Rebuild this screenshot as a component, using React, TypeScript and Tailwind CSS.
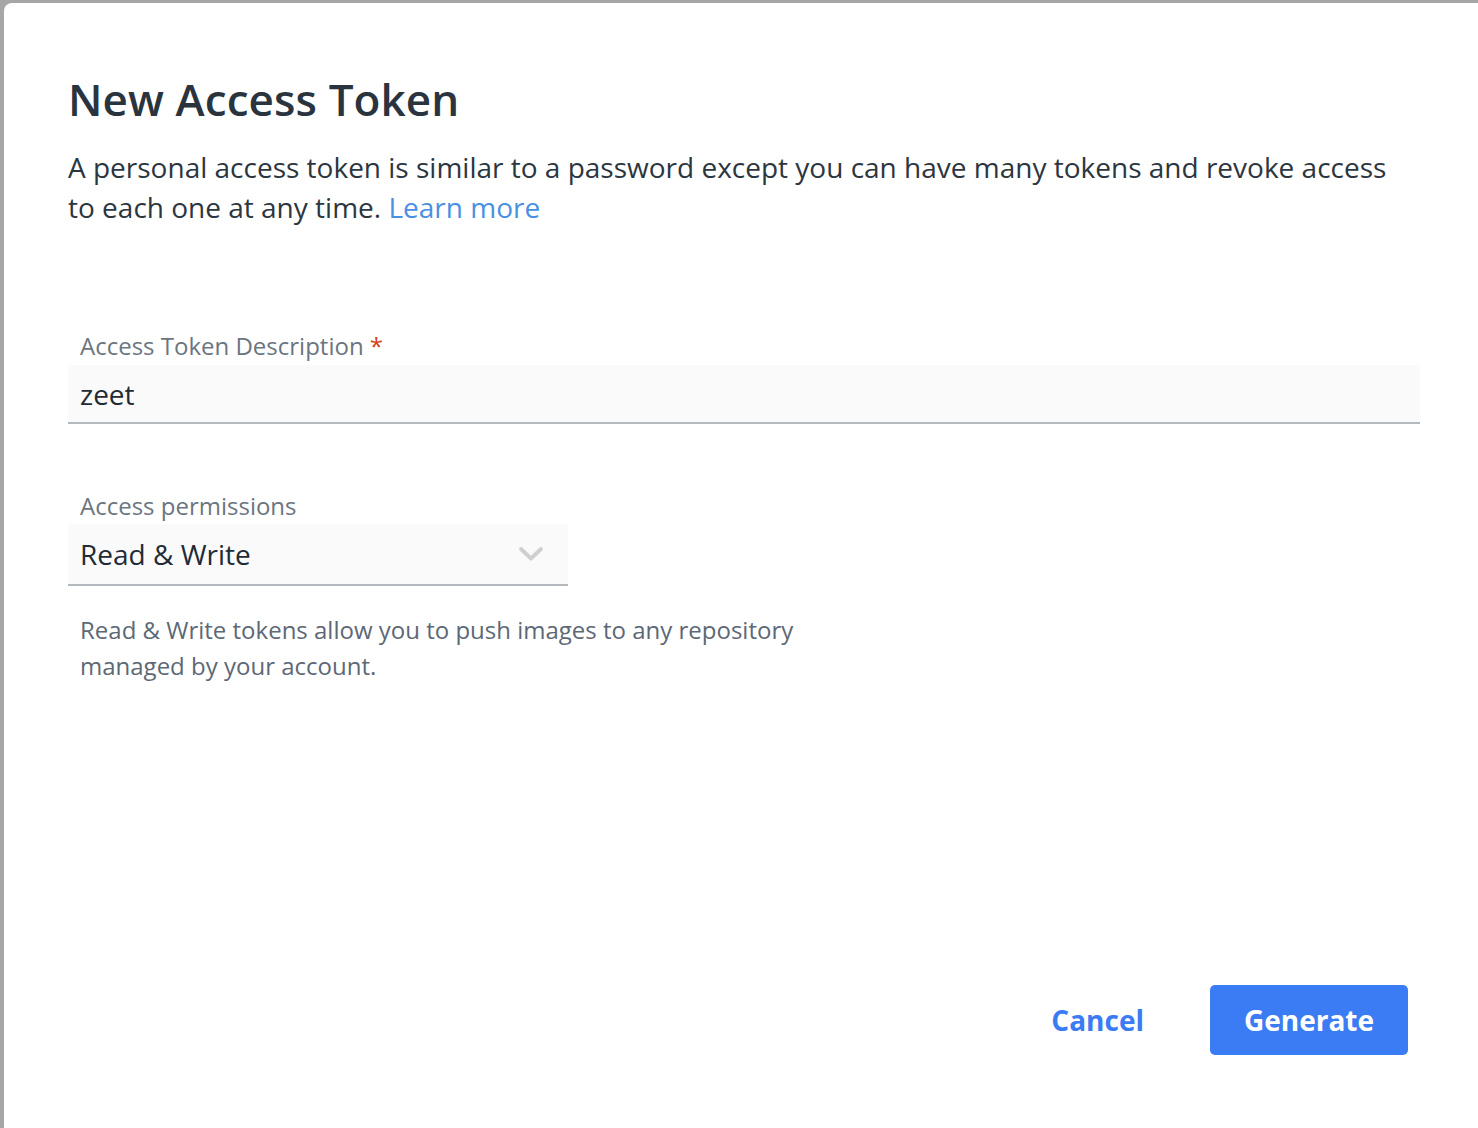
import { useState } from "react";

// New Access Token modal, shown over a dimmed page

function ChevronDown() {
  return (
    <svg width="26" height="16" viewBox="0 0 26 16" fill="none" aria-hidden="true">
      <path d="M3 3 L13 12.5 L23 3" stroke="#cfcfcf" strokeWidth="3.8" strokeLinecap="round" strokeLinejoin="round" />
    </svg>
  );
}

export default function App() {
  const [description, setDescription] = useState("zeet");

  return (
    <div className="h-[1128px] w-full overflow-hidden bg-[#a6a6a6] pl-[4px] pt-[3px] font-['Open_Sans',sans-serif]">
      <div className="flex h-[1200px] flex-col rounded-tl-lg bg-white pl-[64px] pr-[58px] pt-[70px]">
        {/* Header */}
        <h1 className="text-[44px] font-semibold leading-[52px] tracking-[0.1px] text-[#2a343e]">
          New Access Token
        </h1>
        <p className="mt-[22px] text-[28px] leading-[40px] text-[#2c3640]">
          A personal access token is similar to a password except you can have many tokens and revoke access
          to each one at any time. <a href="#" className="text-[#4a90e2]">Learn more</a>
        </p>

        {/* Description field */}
        <label className="mt-[103px] block px-3 text-[24px] leading-[32px] text-[#6b7580]">
          Access Token Description <span className="text-[#d2401c]">*</span>
        </label>
        <input
          value={description}
          onChange={(e) => setDescription(e.target.value)}
          className="mt-[3px] h-[59px] w-full border-b-2 border-[#b4b9be] bg-[#fafafa] px-3 text-[28px] leading-[57px] text-[#222b35] outline-none"
        />

        {/* Permissions select */}
        <div className="mt-[66px] px-3 text-[24px] leading-[32px] text-[#6b7580]">Access permissions</div>
        <div className="mt-[2px] flex h-[62px] w-[500px] items-center justify-between border-b-2 border-[#b4b9be] bg-[#fafafa] pl-3 pr-6">
          <span className="text-[28px] leading-[60px] text-[#222b35]">Read &amp; Write</span>
          <ChevronDown />
        </div>
        <p className="mt-[26px] max-w-[740px] px-3 text-[24px] leading-[36px] text-[#5d6876]">
          Read &amp; Write tokens allow you to push images to any repository managed by your account.
        </p>

        {/* Footer actions */}
        <div className="mt-[301px] flex items-center justify-end gap-[34px] pr-[12px]">
          <button className="px-8 text-[28px] font-bold leading-[70px] text-[#3b7cf5]">Cancel</button>
          <button className="h-[70px] w-[198px] rounded-[5px] bg-[#3b7cf5] text-[28px] font-bold text-white">
            Generate
          </button>
        </div>
      </div>
    </div>
  );
}
